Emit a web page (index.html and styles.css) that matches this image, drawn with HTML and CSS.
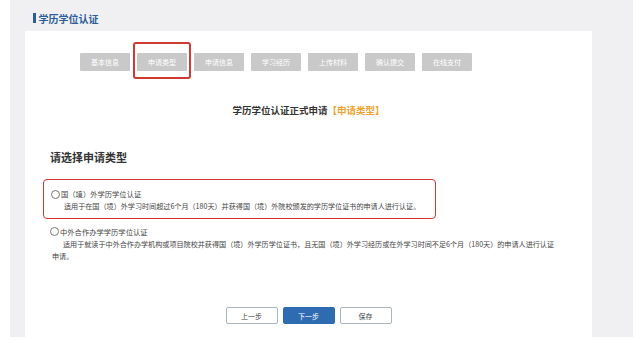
FILE: index.html
```html
<!DOCTYPE html>
<html lang="zh-CN">
<head>
  <meta charset="UTF-8">
  <title>学历学位认证</title>
  <link rel="stylesheet" href="styles.css">
</head>
<body>
  <div class="frame">
    <div class="page-title"><span class="bar"></span>学历学位认证</div>

    <div class="card">
      <div class="steps">
        <div class="step">基本信息</div>
        <div class="step current">申请类型</div>
        <div class="step">申请信息</div>
        <div class="step">学习经历</div>
        <div class="step">上传材料</div>
        <div class="step">确认提交</div>
        <div class="step">在线支付</div>
      </div>

      <h2 class="form-title">学历学位认证正式申请<span class="accent">【申请类型】</span></h2>

      <h3 class="section-title">请选择申请类型</h3>

      <div class="options">
        <div class="option highlight">
          <div class="option-label"><span class="radio"></span>国（境）外学历学位认证</div>
          <p class="option-desc">适用于在国（境）外学习时间超过6个月（180天）并获得国（境）外院校颁发的学历学位证书的申请人进行认证。</p>
        </div>
        <div class="option">
          <div class="option-label"><span class="radio"></span>中外合作办学学历学位认证</div>
          <p class="option-desc wide">适用于就读于中外合作办学机构或项目院校并获得国（境）外学历学位证书，且无国（境）外学习经历或在外学习时间不足6个月（180天）的申请人进行认证申请。</p>
        </div>
      </div>

      <div class="actions">
        <button class="btn">上一步</button>
        <button class="btn primary">下一步</button>
        <button class="btn">保存</button>
      </div>
    </div>
  </div>
</body>
</html>
```

FILE: styles.css
```css
/* Base */
* {
  margin: 0;
  padding: 0;
  box-sizing: border-box;
}

body {
  font-family: "Noto Sans CJK SC", "Noto Sans", sans-serif;
  color: #333;
  background-color: #fff;
  overflow: hidden;
}

.frame {
  display: flex;
  flex-direction: column;
  margin-left: 10px;
  width: 623px;
  height: 337px;
  padding: 0 41px 0 15px;
  background-color: #f0f0f2;
}

/* Page title */
.page-title {
  display: flex;
  align-items: center;
  height: 31px;
  padding: 5px 0 0 8px;
  font-size: 10px;
  font-weight: 700;
  color: #2b5c9b;
}

.page-title .bar {
  width: 2.5px;
  height: 10px;
  margin-right: 3px;
  background-color: #2b5c9b;
}

/* Card */
.card {
  flex: 1;
  display: flex;
  flex-direction: column;
  background-color: #fff;
}

/* Steps */
.steps {
  display: flex;
  gap: 7px;
  margin-top: 22px;
  padding-left: 55px;
}

.step {
  position: relative;
  width: 50px;
  height: 18px;
  line-height: 18px;
  text-align: center;
  font-size: 7px;
  color: #fff;
  background-color: #c9c9c9;
  border-radius: 1px;
}

.step.current::after {
  content: "";
  position: absolute;
  left: -4px;
  right: -4px;
  top: -11px;
  bottom: -8px;
  border: 2px solid #cf3a32;
  border-radius: 3px;
}

/* Headings */
.form-title {
  margin-top: 32px;
  text-align: center;
  font-size: 9.5px;
  line-height: 14px;
  font-weight: 700;
  color: #333;
}

.form-title .accent {
  color: #f0a22e;
}

.section-title {
  margin: 33px 0 0 25px;
  font-size: 11px;
  line-height: 14px;
  font-weight: 700;
  color: #333;
}

/* Options */
.options {
  display: flex;
  flex-direction: column;
  gap: 1px;
  margin: 15px 0 0 18px;
}

.option {
  width: 393px;
  padding: 6px 0 4px 7px;
}

.option.highlight {
  padding: 8px 0 5px 7px;
  border: 1.5px solid #d6362f;
  border-radius: 4px;
}

.option-label {
  display: flex;
  align-items: center;
  font-size: 7.3px;
  line-height: 12px;
  color: #444;
}

.radio {
  width: 9px;
  height: 9px;
  margin-right: 1px;
  border: 1px solid #777;
  border-radius: 50%;
}

.option-desc {
  padding-left: 2px;
  text-indent: 11px;
  font-size: 7.1px;
  line-height: 12.5px;
  color: #444;
}

.option-desc.wide {
  width: 506px;
}

/* Actions */
.actions {
  display: flex;
  justify-content: center;
  gap: 5px;
  margin-top: auto;
  margin-bottom: 13px;
}

.btn {
  width: 52px;
  height: 17px;
  font-family: inherit;
  font-size: 7px;
  color: #444;
  background-color: #fff;
  border: 1px solid #a9b4c4;
  border-radius: 2px;
}

.btn.primary {
  color: #fff;
  background-color: #2e6bb1;
  border-color: #2e6bb1;
}
```
